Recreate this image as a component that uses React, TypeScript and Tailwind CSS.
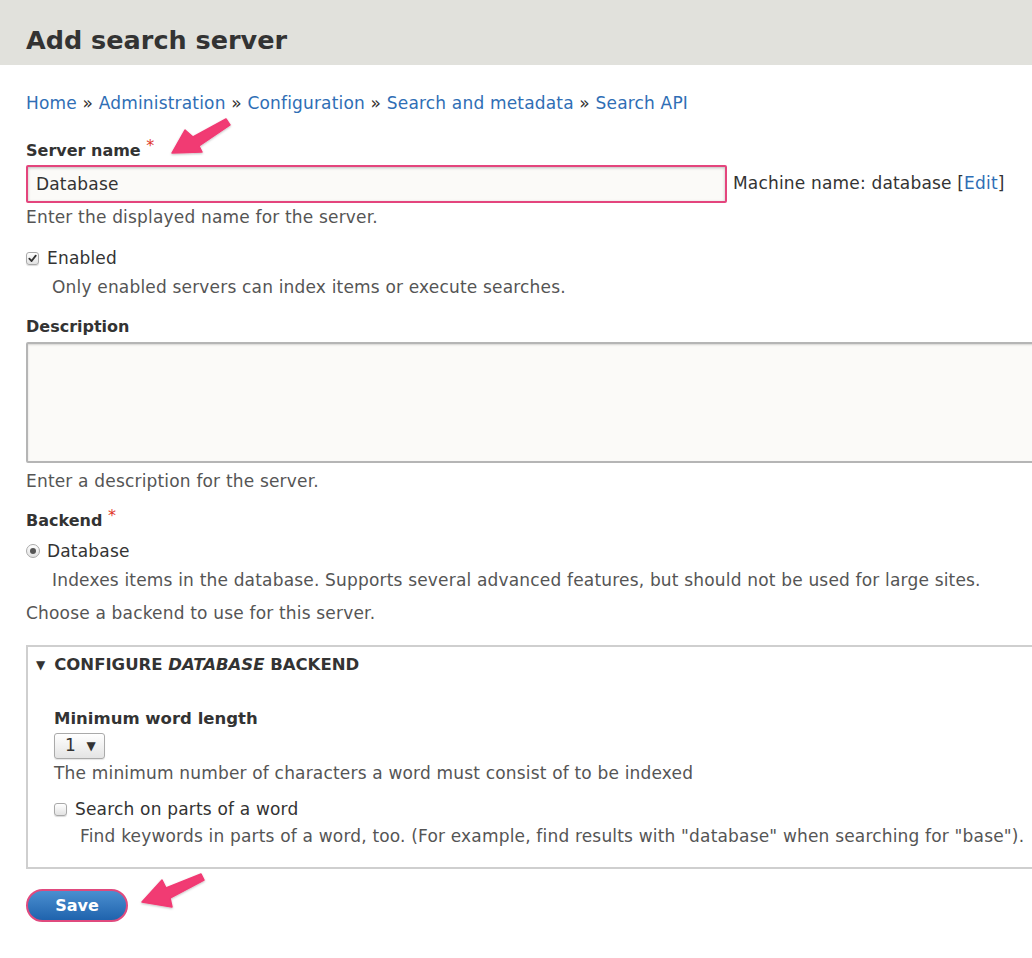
import { useState } from "react";

const font = { fontFamily: '"DejaVu Sans", "Open Sans", sans-serif' };

function Checkbox({ checked }: { checked?: boolean }) {
  return (
    <span className="inline-flex h-[13px] w-[13px] shrink-0 items-center justify-center rounded-[3px] border border-[#a9a9a9] bg-gradient-to-b from-white to-[#e2e2e2] shadow-[0_1px_1px_rgba(0,0,0,0.15)]">
      {checked && (
        <svg width="9" height="9" viewBox="0 0 10 10">
          <path d="M1.5 5.2 L4 7.8 L8.6 1.8" fill="none" stroke="#333" strokeWidth="2" strokeLinecap="round" strokeLinejoin="round" />
        </svg>
      )}
    </span>
  );
}

function Radio() {
  return (
    <span className="inline-flex h-[14px] w-[14px] shrink-0 items-center justify-center rounded-full border border-[#a9a9a9] bg-gradient-to-b from-white to-[#e0e0e0]">
      <span className="h-[6px] w-[6px] rounded-full bg-[#555]" />
    </span>
  );
}

function Arrows() {
  return (
    <svg className="pointer-events-none absolute left-0 top-0" width="1032" height="958" viewBox="0 0 1032 958">
      <defs>
        <filter id="sh" x="-20%" y="-20%" width="140%" height="140%">
          <feDropShadow dx="0" dy="1" stdDeviation="1" floodColor="#000" floodOpacity="0.25" />
        </filter>
      </defs>
      <polygon
        points="172,153 185,130 193,137 226,119 230,125 199,146 202,152"
        fill="#f13a73"
        filter="url(#sh)"
        strokeLinejoin="round"
        stroke="#f13a73"
        strokeWidth="1.5"
      />
      <polygon
        points="142,902 162,880 166,888 201,874 204,880 170,898 172,907"
        fill="#f13a73"
        filter="url(#sh)"
        strokeLinejoin="round"
        stroke="#f13a73"
        strokeWidth="1.5"
      />
    </svg>
  );
}

export default function App() {
  const [name, setName] = useState("Database");

  return (
    <div className="relative h-[958px] w-[1032px] overflow-hidden bg-white text-[17px] tracking-[0.18px] text-[#333]" style={font}>
      <header className="h-[65px] bg-[#e1e1dc] pl-[26px] pt-[25px]">
        <h1 className="text-[25.5px] font-bold leading-[30px] tracking-normal text-[#333]">Add search server</h1>
      </header>

      <main className="w-[1080px] pl-[26px]">
        <nav className="mt-[28px] h-[20px] leading-[20px]">
          <a className="text-[#2f6eb5]">Home</a> » <a className="text-[#2f6eb5]">Administration</a> »{" "}
          <a className="text-[#2f6eb5]">Configuration</a> » <a className="text-[#2f6eb5]">Search and metadata</a> »{" "}
          <a className="text-[#2f6eb5]">Search API</a>
        </nav>

        <label className="mt-[28px] block h-[20px] text-[16px] font-bold leading-[20px] tracking-normal">
          Server name <span className="relative -top-[5px] font-normal text-[#e0372b]">*</span>
        </label>
        <div className="mt-[4px] flex items-center">
          <input
            value={name}
            onChange={(e) => setName(e.target.value)}
            className="h-[38px] w-[701px] rounded-[2px] border-2 border-[#e4457d] bg-[#fbfaf8] px-[8px] text-[17px] text-[#333] shadow-[inset_0_1px_3px_rgba(0,0,0,0.25)] outline-none"
          />
          <span className="ml-[6px]">
            Machine name: database [<a className="text-[#2f6eb5]">Edit</a>]
          </span>
        </div>
        <p className="mt-[4px] h-[20px] leading-[20px] text-[#555]">Enter the displayed name for the server.</p>

        <div className="mt-[21px] flex h-[20px] items-center gap-[8px] leading-[20px]">
          <Checkbox checked />
          <span>Enabled</span>
        </div>
        <p className="mt-[9px] h-[20px] pl-[26px] leading-[20px] text-[#555]">Only enabled servers can index items or execute searches.</p>

        <label className="mt-[20px] block h-[20px] text-[16px] font-bold leading-[20px] tracking-normal">Description</label>
        <textarea className="mt-[5px] block h-[121px] w-[1040px] resize-none rounded-[2px] border-2 border-[#b5b5b5] bg-[#fbfaf8] shadow-[inset_0_1px_2px_rgba(0,0,0,0.15)] outline-none" />
        <p className="mt-[8px] h-[20px] leading-[20px] text-[#555]">Enter a description for the server.</p>

        <label className="mt-[20px] block h-[20px] text-[16px] font-bold leading-[20px] tracking-normal">
          Backend <span className="relative -top-[5px] font-normal text-[#e0372b]">*</span>
        </label>
        <div className="mt-[10px] flex h-[20px] items-center gap-[7px] leading-[20px]">
          <Radio />
          <span>Database</span>
        </div>
        <p className="mt-[9px] h-[20px] pl-[26px] leading-[20px] text-[#555]">
          Indexes items in the database. Supports several advanced features, but should not be used for large sites.
        </p>
        <p className="mt-[13px] h-[20px] leading-[20px] text-[#555]">Choose a backend to use for this server.</p>

        <fieldset className="mt-[22px] h-[224px] w-[1040px] border-2 border-[#cfcfcf]">
          <div className="mt-[8px] flex h-[20px] items-center gap-[9px] pl-[8px] text-[16.5px] font-bold uppercase leading-[20px] tracking-normal">
            <span className="text-[12px]">▼</span>
            <span>
              Configure <em>Database</em> Backend
            </span>
          </div>
          <div className="pl-[26px]">
            <label className="mt-[34px] block h-[20px] text-[16.5px] font-bold leading-[20px] tracking-normal">Minimum word length</label>
            <div className="mt-[4px] flex h-[26px] w-[51px] items-center justify-between rounded-[3px] border border-[#aaa] bg-gradient-to-b from-white to-[#e4e4e4] pl-[10px] pr-[8px] shadow-[0_1px_1px_rgba(0,0,0,0.1)]">
              <span className="text-[17px]">1</span>
              <span className="text-[12px]">▼</span>
            </div>
            <p className="mt-[4px] h-[20px] leading-[20px] text-[#555]">
              The minimum number of characters a word must consist of to be indexed
            </p>
            <div className="mt-[16px] flex h-[20px] items-center gap-[8px] leading-[20px]">
              <Checkbox />
              <span>Search on parts of a word</span>
            </div>
            <p className="mt-[7px] h-[20px] whitespace-nowrap pl-[26px] leading-[20px] text-[#555]">
              Find keywords in parts of a word, too. (For example, find results with "database" when searching for "base").
            </p>
          </div>
        </fieldset>

        <button className="mt-[20px] flex h-[33px] w-[102px] items-center justify-center rounded-full border-2 border-[#e04a7e] bg-gradient-to-b from-[#4a8fd0] to-[#1f63ad] text-[16px] font-bold tracking-normal text-white">
          Save
        </button>
      </main>

      <Arrows />
    </div>
  );
}
